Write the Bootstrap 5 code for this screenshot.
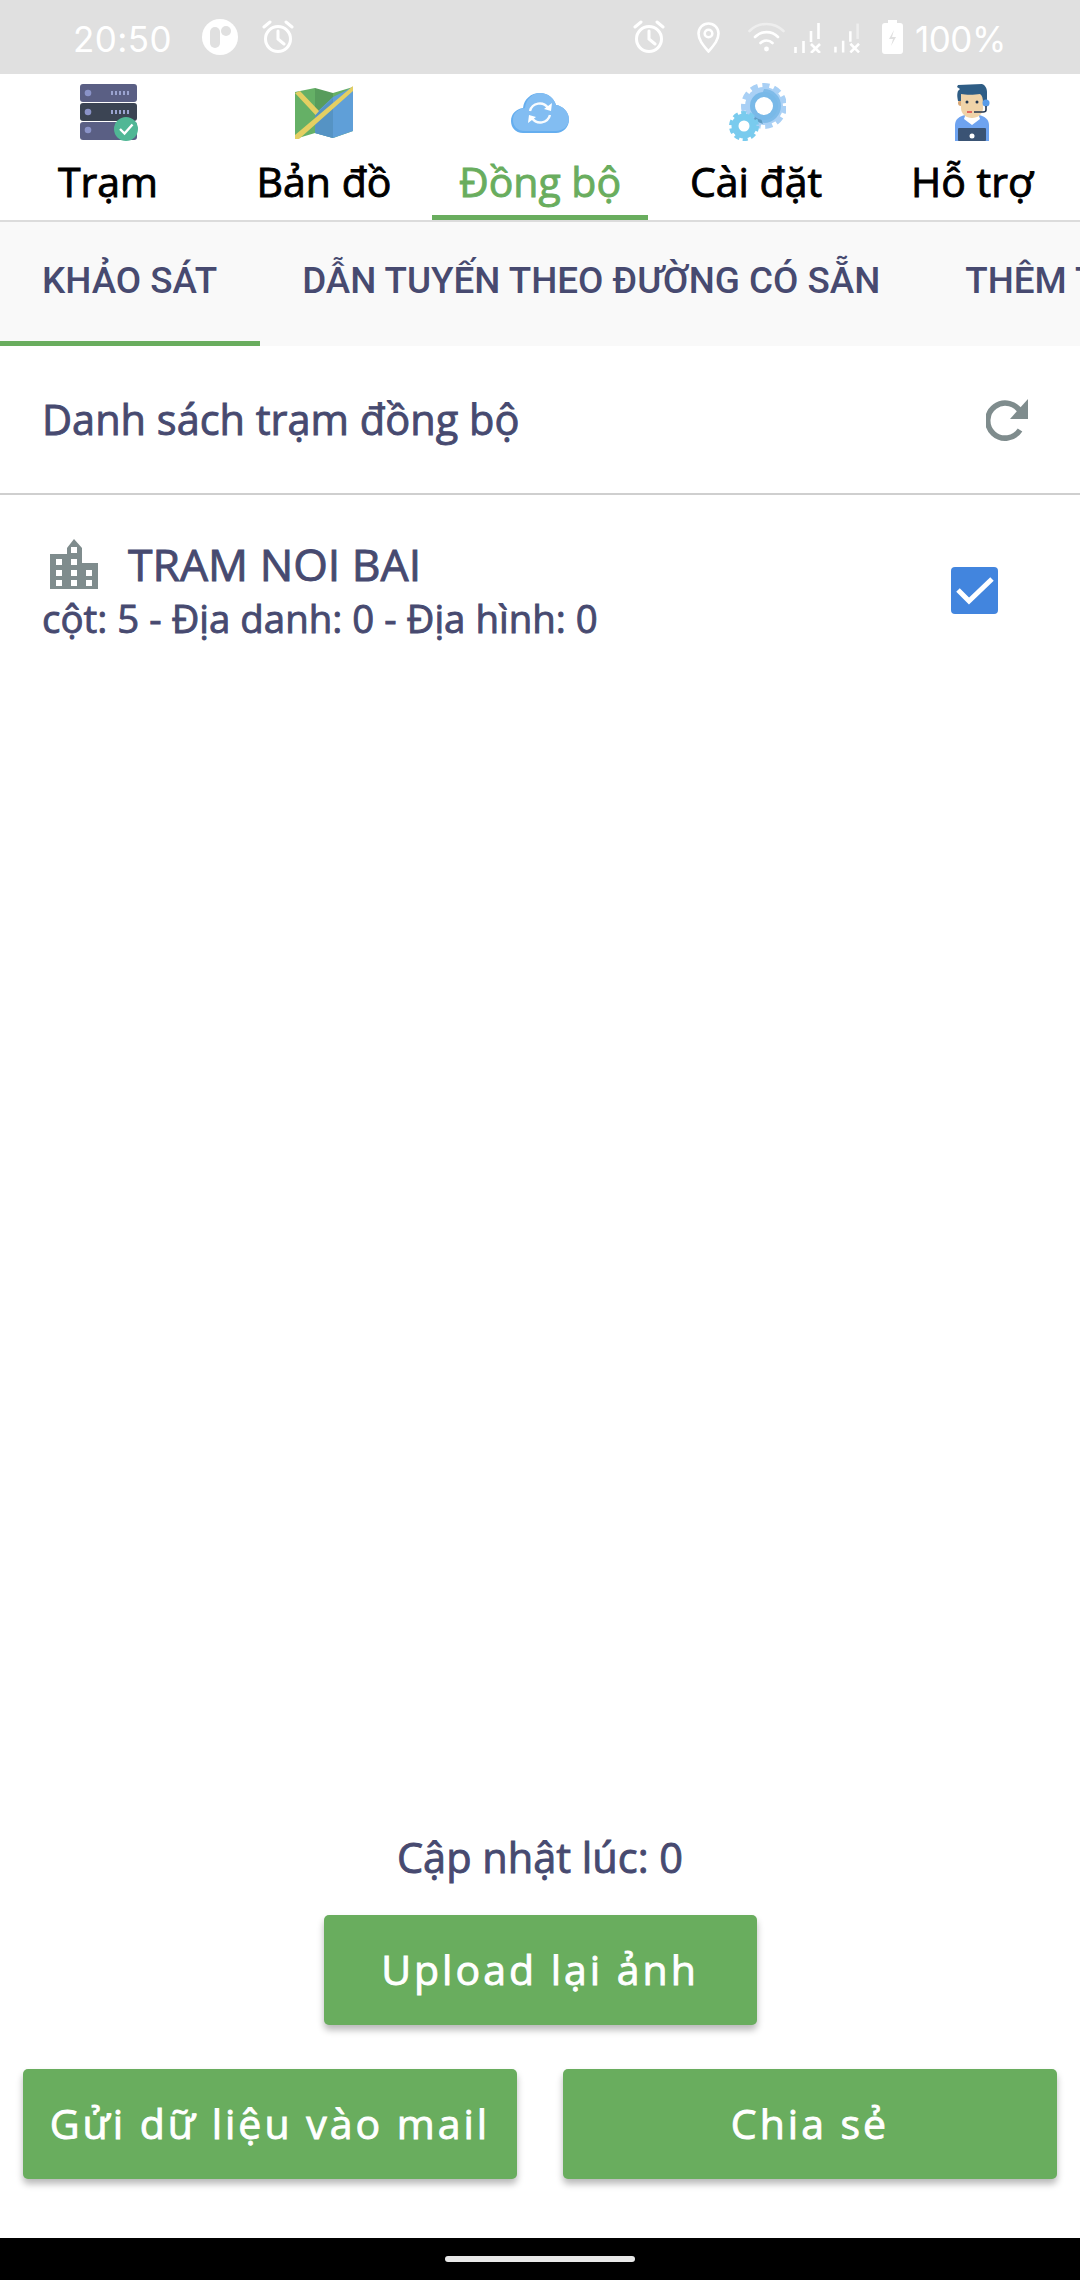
<!DOCTYPE html>
<html lang="vi">
<head>
  <meta charset="UTF-8" />
  <title>Đồng bộ</title>
  <link href="https://cdn.jsdelivr.net/npm/bootstrap@5.3.0/dist/css/bootstrap.min.css" rel="stylesheet">
  <style>
    html, body { height: 100%; }
    body {
      width: 1080px;
      height: 2280px;
      overflow: hidden;
      background: #fff;
      font-family: "Open Sans", "Liberation Sans", sans-serif;
      color: #474a70;
    }

    /* the app text sits between regular and semibold */
    .main-tab, .list-head, .station-name, .station-meta, .updated, .btn-green {
      font-weight: 400;
      -webkit-text-stroke: .9px currentColor;
    }

    /* status bar */
    .status-bar {
      height: 74px;
      padding: 0 75px 0 74px;
      background: #e0e0e0;
      color: #fff;
      font-family: Inter, Roboto, sans-serif;
      font-size: 35px;
      flex: none;
    }
    .status-bar svg { display: block; flex: none; }
    .status-bar span { padding-top: 5px; }
    .status-time { width: 96px; letter-spacing: .4px; margin-left: -1px; margin-right: 1px; }
    .status-pct { margin-left: 12px; width: 90px; letter-spacing: -.5px; white-space: nowrap; }
    .sb-32 { margin-left: 32px; }
    .sb-24 { margin-left: 24px; }
    .sb-28 { margin-left: 28px; }
    .sb-9 { margin-left: 9px; }
    .sb-13 { margin-left: 13px; }
    .sb-22 { margin-left: 22px; }

    /* top tabs */
    .main-tabs {
      height: 148px;
      border-bottom: 2px solid #dcdcdc;
      flex: none;
    }
    .main-tab {
      width: 216px;
      height: 146px;
      padding-top: 9px;
      color: #000;
      font-size: 41px;
      line-height: 53px;
      text-decoration: none;
    }
    .main-tab svg { display: block; margin: 0 auto 12px; }
    .main-tab.is-active {
      color: #69ad5e;
      border-bottom: 5px solid #69ad5e;
    }

    /* sub tabs */
    .sub-tabs {
      height: 124px;
      background: #f9f9f9;
      font-family: Roboto, "Liberation Sans", sans-serif;
      flex: none;
      overflow: hidden;
      flex-wrap: nowrap;
    }
    .sub-tab {
      height: 124px;
      padding: 0 43px 6px 42px;
      color: #474a70;
      font-size: 36.8px;
      font-weight: 500;
      white-space: nowrap;
      text-decoration: none;
      flex: none;
    }
    .sub-tab.is-active { border-bottom: 5px solid #69ad5e; padding-bottom: 1px; }

    .list-head {
      height: 149px;
      padding: 0 50px 0 42px;
      border-bottom: 2px solid #cfcfcf;
      font-size: 41.5px;
      flex: none;
    }
    .station {
      padding: 41px 82px 0 42px;
      flex: none;
    }
    .station-name {
      font-size: 44.5px;
      line-height: 56px;
    }
    .station-name svg { margin: 0 30px 0 8px; flex: none; }
    .station-meta {
      margin-top: 1px;
      font-size: 38.4px;
      line-height: 50px;
    }
    .station .form-check-input {
      width: 47px;
      height: 47px;
      margin: 31px 0 0;
      background-color: #4285de;
      background-image: url("data:image/svg+xml,%3csvg xmlns='http://www.w3.org/2000/svg' viewBox='0 0 47 47'%3e%3cpath fill='none' stroke='%23fff' stroke-width='5' d='M7 23l11 11 23-22'/%3e%3c/svg%3e");
      background-size: 47px 47px;
      border: 0;
      border-radius: 4px;
      flex: none;
    }

    .updated {
      font-size: 41.5px;
      line-height: 52px;
      margin-bottom: 32px;
      text-align: center;
    }
    .btn-green {
      height: 110px;
      padding: 0;
      background: #69ad5e;
      border: 0;
      border-radius: 5px;
      box-shadow: 0 5px 7px rgba(0, 0, 0, .28);
      color: #fff;
      font-size: 41px;
      letter-spacing: 3px;
      white-space: nowrap;
    }
    .btn-green:hover { background: #69ad5e; color: #fff; }
    .btn-upload { width: 433px; }
    .btn-half { width: 494px; }
    .btn-row { padding: 0 23px; margin: 44px 0 59px; }

    .nav-strip {
      height: 42px;
      background: #000;
      flex: none;
    }
    .nav-pill {
      width: 190px;
      height: 6px;
      border-radius: 3px;
      background: #e8e8e8;
    }
  </style>
</head>
<body class="d-flex flex-column">

  <div class="status-bar d-flex align-items-center">
    <span class="status-time">20:50</span>
    <svg class="sb-32" width="36" height="36" viewBox="0 0 36 36"><circle cx="18" cy="18" r="18" fill="#fff"/><rect x="8" y="8" width="10" height="21" rx="5" fill="#e0e0e0"/><circle cx="24" cy="12" r="5" fill="#e0e0e0"/></svg>
    <svg class="sb-24" width="32" height="34" viewBox="0 0 32 34" fill="none" stroke="#fff" stroke-width="3" stroke-linecap="round"><circle cx="16" cy="19" r="12.5"/><path d="M16 11v8l6 5M2 7l6-5M30 7l-6-5"/></svg>
    <div class="ms-auto d-flex align-items-center">
      <svg width="32" height="34" viewBox="0 0 32 34" fill="none" stroke="#fff" stroke-width="3" stroke-linecap="round"><circle cx="16" cy="19" r="12.5"/><path d="M16 11v8l6 5M2 7l6-5M30 7l-6-5"/></svg>
      <svg class="sb-32" width="23" height="31" viewBox="0 0 23 31" fill="none" stroke="#fff" stroke-width="2.6"><path d="M11.5 29.5C6 23 1.5 18 1.5 11.5a10 10 0 0 1 20 0C21.500 18 17 23 11.500 29.500z"/><circle cx="11.500" cy="11.500" r="3.800"/></svg>
      <svg class="sb-28" width="37" height="30" viewBox="0 0 37 30" fill="none" stroke="#fff" stroke-width="2.6" stroke-linecap="round"><path d="M1.500 9a24 24 0 0 1 34 0" opacity=".45"/><path d="M7 15a16 16 0 0 1 23 0M12.500 21a8.500 8.500 0 0 1 12 0"/><circle cx="18.500" cy="27" r="2.400" fill="#fff" stroke="none"/></svg>
      <svg class="sb-9" width="27" height="31" viewBox="0 0 27 31" fill="none" stroke="#fff" stroke-width="2.600"><path d="M1.500 31v-6M9.500 31V19M17 20V9M24.500 17V1"/><path d="M17 22l9 9M26 22l-9 9"/></svg>
      <svg class="sb-13" width="26" height="31" viewBox="0 0 27 31" fill="none" stroke="#fff" stroke-width="2.600"><path d="M1.500 31v-6M9.500 31V19M17 20V9"/><path d="M24.500 17V1" opacity=".45"/><path d="M17 22l9 9M26 22l-9 9"/></svg>
      <svg class="sb-22" width="21" height="34" viewBox="0 0 21 34"><path d="M6 0h9v3h3a3 3 0 0 1 3 3v25a3 3 0 0 1-3 3H3a3 3 0 0 1-3-3V6a3 3 0 0 1 3-3h3z" fill="#fff"/><path d="M12 10l-5 9h4l-2 7 5-9h-4z" fill="#e0e0e0"/></svg>
      <span class="status-pct">100%</span>
    </div>
  </div>

  <nav class="main-tabs d-flex">
    <a class="main-tab text-center" href="#">
      <svg width="60" height="60" viewBox="0 0 60 60">
        <rect x="2" y="1" width="57" height="18" rx="3" fill="#5a5f84"/>
        <rect x="2" y="20" width="57" height="18" rx="3" fill="#3b4453"/>
        <rect x="2" y="39" width="57" height="18" rx="3" fill="#5a5f84"/>
        <circle cx="10" cy="10" r="3.300" fill="#8a93c8"/><circle cx="10" cy="29" r="3.300" fill="#8a93c8"/><circle cx="10" cy="47" r="3.300" fill="#8a93c8"/>
        <path d="M33 10h19M33 29h19" stroke="#9aa3cf" stroke-width="4" stroke-dasharray="2 2"/>
        <circle cx="48" cy="46" r="12" fill="#50b795"/>
        <path d="M42 46l4.500 4.500 8-9" fill="none" stroke="#fff" stroke-width="2.400"/>
      </svg>
      Trạm
    </a>
    <a class="main-tab text-center" href="#">
      <svg width="60" height="60" viewBox="0 0 60 60">
        <path d="M1 9l20-4v45L1 56z" fill="#65b066"/>
        <path d="M21 5l18 5v45l-18-5z" fill="#579c5c"/>
        <path d="M39 10l20-6v44l-20 7z" fill="#65b066"/>
        <path d="M21 31l18-17v41l-18-5zM39 14l20-10v44l-20 7z" fill="#5f9fd8"/>
        <path d="M21 32v18l18 5V15z" fill="#5593c4"/>
        <path d="M1 10l5-2 19 20-3.500 4z" fill="#e4cf62"/>
        <path d="M1 52l58-49v5L5 56H1z" fill="#e4cf62"/>
      </svg>
      Bản đồ
    </a>
    <a class="main-tab is-active text-center" href="#">
      <svg width="60" height="60" viewBox="0 0 60 60">
        <path d="M13 50C5 50 1 44 1 38c0-7 5-12 12-13 1-9 8-15 17-15 8 0 14 5 16 12 7 1 13 7 13 15 0 7-6 13-13 13z" fill="#65aeef"/>
        <path d="M15 48C7 48 3 43 3 37c0-7 5-11 12-12 1-9 8-15 15-15 8 0 14 5 16 12 7 1 13 7 13 14 0 7-6 12-13 12z" fill="#82bdf2"/>
        <g fill="none" stroke="#fff" stroke-width="2.400" opacity=".95"><path d="M20 28a10 10 0 0 1 18-3"/><path d="M40 32a10 10 0 0 1-18 3"/></g>
        <path d="M34 26l7 2 1-8zM26 34l-7-2-1 8z" fill="#fff"/>
      </svg>
      Đồng bộ
    </a>
    <a class="main-tab text-center" href="#">
      <svg width="60" height="60" viewBox="0 0 60 60">
        <circle cx="38" cy="23" r="20" fill="none" stroke="#a9d0f5" stroke-width="6" stroke-dasharray="7 4.500"/>
        <circle cx="38" cy="23" r="19" fill="#a9d0f5"/>
        <path d="M38 6a17 17 0 0 1 0 34L27 36z" fill="#7fbbe9"/>
        <path d="M27 37l10 4-4-11z" fill="#5f9cc4"/>
        <circle cx="38" cy="23" r="14" fill="#79b9e8"/>
        <circle cx="38" cy="23" r="9" fill="#fff"/>
        <circle cx="18" cy="43" r="13" fill="none" stroke="#79cbee" stroke-width="4" stroke-dasharray="5 3.300"/>
        <circle cx="18" cy="43" r="12.500" fill="#79cbee"/>
        <circle cx="18" cy="43" r="5.500" fill="#fff"/>
      </svg>
      Cài đặt
    </a>
    <a class="main-tab text-center" href="#">
      <svg width="60" height="60" viewBox="0 0 60 60">
        <path d="M13 58V42c0-6 5-9 10-10h14c5 1 10 4 10 10v16z" fill="#6ea3f0"/>
        <path d="M24 30l6 5 6-5 2 6-8 6-8-6z" fill="#fff"/>
        <circle cx="19" cy="20" r="3" fill="#d9a877"/>
        <path d="M19 9h22v16c0 6-5 10-11 10s-11-4-11-10z" fill="#f0d3a8"/>
        <path d="M16 2l24-1c3 1 5 4 5 8v11h-4c0-5-1-8-3-9-6 1-14 1-19 0v7h-3c-1-5-1-7 0-10l2-2-3-2z" fill="#2f5d85"/>
        <circle cx="25" cy="19" r="1.500" fill="#23364f"/><circle cx="35" cy="19" r="1.500" fill="#23364f"/>
        <path d="M25 29h5" stroke="#e2685f" stroke-width="2"/>
        <circle cx="44" cy="20" r="3.500" fill="#5a9ce8"/>
        <path d="M44 23v4c0 1-1 2-3 2h-9" fill="none" stroke="#23364f" stroke-width="1.600"/>
        <rect x="16" y="45" width="28" height="13" rx="1" fill="#3a5374"/>
        <circle cx="30" cy="53" r="2.500" fill="#fff"/>
      </svg>
      Hỗ trợ
    </a>
  </nav>

  <div class="sub-tabs d-flex">
    <a class="sub-tab is-active d-flex align-items-center" href="#">KHẢO SÁT</a>
    <a class="sub-tab d-flex align-items-center" href="#">DẪN TUYẾN THEO ĐƯỜNG CÓ SẴN</a>
    <a class="sub-tab d-flex align-items-center" href="#">THÊM TUYẾN</a>
  </div>

  <div class="list-head d-flex align-items-center justify-content-between">
    <span>Danh sách trạm đồng bộ</span>
    <svg width="44" height="44" viewBox="0 0 44 44"><path d="M35 31a17.500 17.500 0 1 1 1-17" fill="none" stroke="#7f8c8d" stroke-width="5.500" transform="translate(-1 1)"/><path d="M42 1v20H24z" fill="#7f8c8d"/></svg>
  </div>

  <div class="station d-flex justify-content-between">
    <div>
      <div class="station-name d-flex align-items-center">
        <svg width="48" height="50" viewBox="0 0 48 50" fill="#7f8c8d"><path d="M0 15h17V9l7-9 8 9v15h16v26H0z"/><g fill="#fff"><rect x="21" y="8" width="6" height="6"/><rect x="6" y="20" width="6" height="6"/><rect x="21" y="20" width="6" height="6"/><rect x="6" y="31" width="6" height="6"/><rect x="21" y="31" width="6" height="6"/><rect x="36" y="31" width="6" height="6"/><rect x="6" y="41" width="6" height="6"/><rect x="21" y="41" width="6" height="6"/><rect x="36" y="41" width="6" height="6"/></g></svg>
        TRAM NOI BAI
      </div>
      <div class="station-meta">cột: 5 - Địa danh: 0 - Địa hình: 0</div>
    </div>
    <input class="form-check-input" type="checkbox" checked aria-label="Chọn trạm">
  </div>

  <div class="mt-auto">
    <div class="updated">Cập nhật lúc: 0</div>
    <div class="d-flex justify-content-center">
      <button class="btn btn-green btn-upload" type="button">Upload lại ảnh</button>
    </div>
    <div class="btn-row d-flex justify-content-between">
      <button class="btn btn-green btn-half" type="button">Gửi dữ liệu vào mail</button>
      <button class="btn btn-green btn-half" type="button">Chia sẻ</button>
    </div>
  </div>

  <div class="nav-strip d-flex align-items-center justify-content-center">
    <div class="nav-pill"></div>
  </div>

  <script src="https://cdn.jsdelivr.net/npm/bootstrap@5.3.0/dist/js/bootstrap.bundle.min.js"></script>
</body>
</html>
